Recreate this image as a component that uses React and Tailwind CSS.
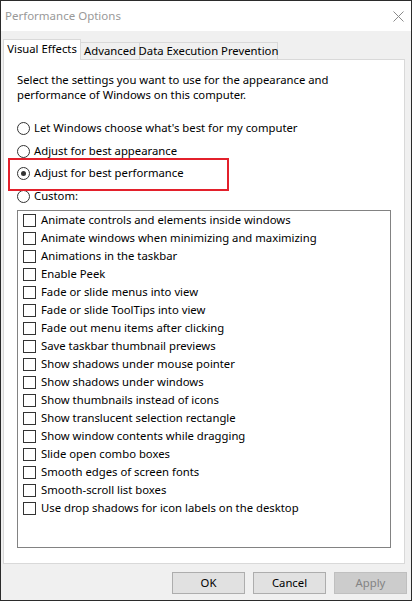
import React from 'react';

const effects = [
  'Animate controls and elements inside windows',
  'Animate windows when minimizing and maximizing',
  'Animations in the taskbar',
  'Enable Peek',
  'Fade or slide menus into view',
  'Fade or slide ToolTips into view',
  'Fade out menu items after clicking',
  'Save taskbar thumbnail previews',
  'Show shadows under mouse pointer',
  'Show shadows under windows',
  'Show thumbnails instead of icons',
  'Show translucent selection rectangle',
  'Show window contents while dragging',
  'Slide open combo boxes',
  'Smooth edges of screen fonts',
  'Smooth-scroll list boxes',
  'Use drop shadows for icon labels on the desktop',
];

const radios = [
  { label: "Let Windows choose what's best for my computer", h: 'h-[23px]' },
  { label: 'Adjust for best appearance', h: 'h-[22px]' },
  { label: 'Adjust for best performance', h: 'h-[23px]', checked: true },
  { label: 'Custom:', h: 'h-[22px]' },
];

const Radio = ({ checked }) => (
  <span className="w-[13px] h-[13px] rounded-full border border-[#333] bg-white flex items-center justify-center shrink-0">
    {checked && <span className="w-[5px] h-[5px] rounded-full bg-[#333]" />}
  </span>
);

const App = () => {
  return (
    <div
      className="w-[412px] h-[601px] border border-[#2b2b2b] bg-[#f0f0f0] flex flex-col text-[11.3px] text-black overflow-hidden whitespace-nowrap"
      style={{ fontFamily: '"Noto Sans", "Open Sans", sans-serif' }}
    >
      {/* title bar */}
      <div className="h-[30px] bg-white flex items-center justify-between pl-[4px] pr-[7px] shrink-0">
        <span className="text-[#999] text-[11.5px]">Performance Options</span>
        <svg width="11" height="11" viewBox="0 0 11 11" className="mt-[1px]">
          <path d="M0.5 0.5 L10.5 10.5 M10.5 0.5 L0.5 10.5" stroke="#8a8a8a" strokeWidth="1" fill="none" />
        </svg>
      </div>

      {/* tabs */}
      <div className="flex items-end pl-[2px] pt-[7px] h-[28px] shrink-0 relative z-10">
        <div className="w-[78px] h-[21px] bg-white border border-b-0 border-[#d9d9d9] flex items-center justify-center pb-[1px] -mb-px">
          Visual Effects
        </div>
        <div className="w-[59px] h-[17px] border border-b-0 border-l-0 border-[#d9d9d9] flex items-center justify-center">
          Advanced
        </div>
        <div className="w-[138px] h-[17px] border border-b-0 border-l-0 border-[#d9d9d9] flex items-center justify-center">
          Data Execution Prevention
        </div>
      </div>

      {/* panel */}
      <div className="ml-[2px] w-[402px] h-[505px] bg-white border border-[#d9d9d9] relative flex flex-col pl-[13px] pt-[12px] shrink-0">
        <p className="leading-[15px] whitespace-normal w-[330px]">
          Select the settings you want to use for the appearance and performance of Windows on this computer.
        </p>

        <div className="mt-[15px] flex flex-col">
          {radios.map((r) => (
            <div key={r.label} className={`${r.h} flex items-center gap-[4px]`}>
              <Radio checked={r.checked} />
              <span>{r.label}</span>
            </div>
          ))}
        </div>

        <div className="mt-[3px] w-[374px] h-[338px] border border-[#828282] pl-[5px] flex flex-col">
          {effects.map((e) => (
            <div key={e} className="h-[18px] flex items-center gap-[5px]">
              <span className="w-[13px] h-[13px] border border-[#333] bg-white shrink-0" />
              <span>{e}</span>
            </div>
          ))}
        </div>

        {/* annotation box */}
        <div className="absolute left-[4px] top-[98px] w-[221px] h-[33px] border-2 border-[#e3202b]" />
      </div>

      {/* buttons */}
      <div className="flex justify-end gap-[8px] pr-[4px] mt-[8px]">
        <button className="w-[73px] h-[22px] bg-[#e1e1e1] border border-[#adadad] text-black">OK</button>
        <button className="w-[73px] h-[22px] bg-[#e1e1e1] border border-[#adadad] text-black">Cancel</button>
        <button className="w-[73px] h-[22px] bg-[#cccccc] border border-[#bfbfbf] text-[#838383]">Apply</button>
      </div>
    </div>
  );
};

export default App;
